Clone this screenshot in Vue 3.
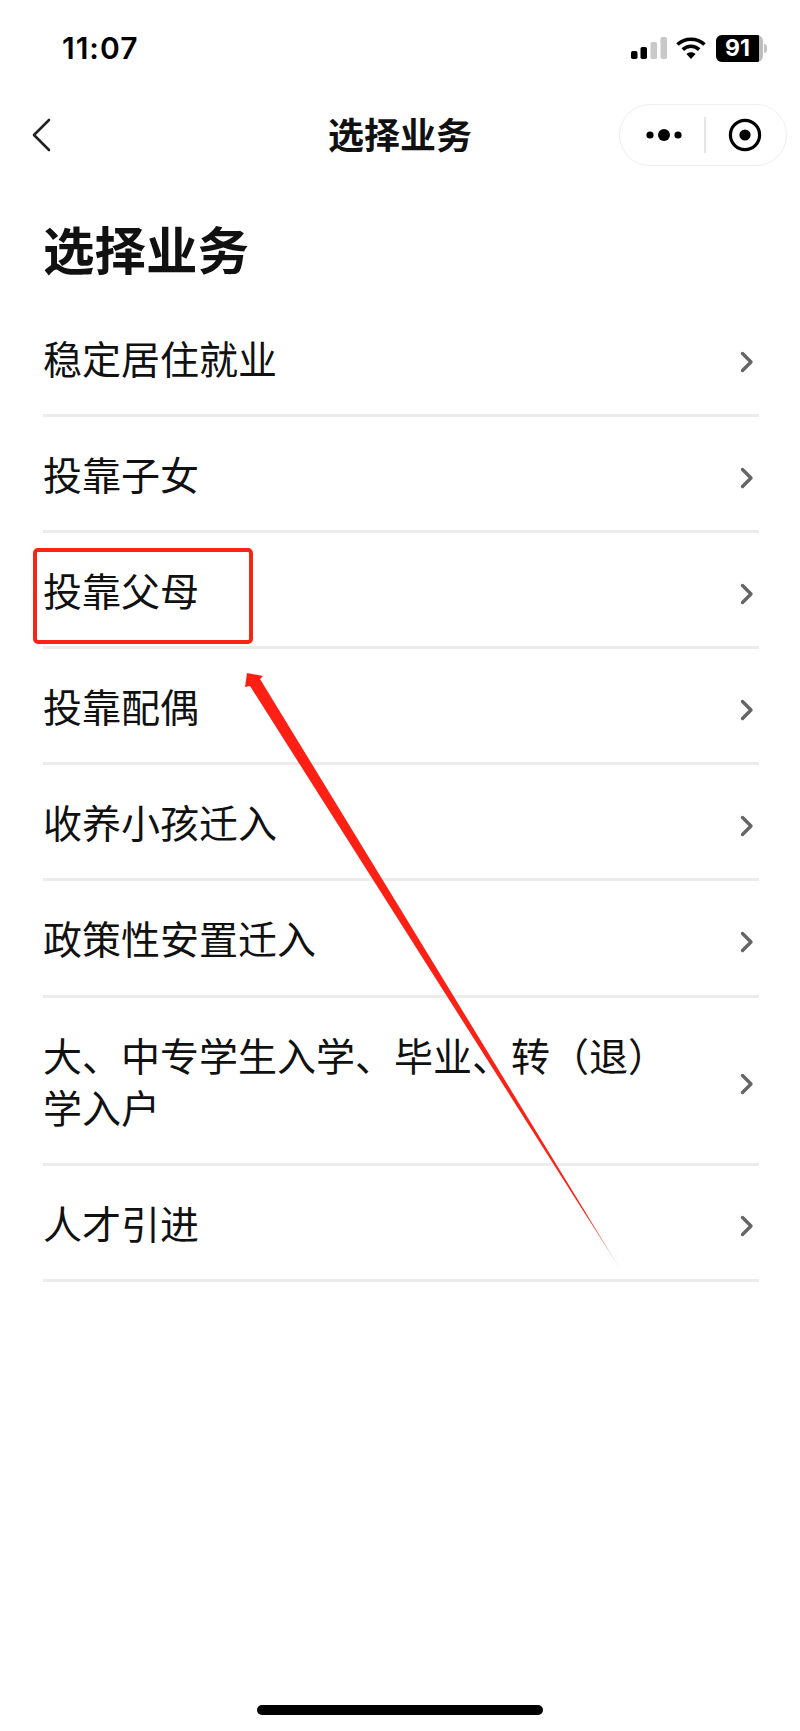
<script setup>
const items = [
  '稳定居住就业',
  '投靠子女',
  '投靠父母',
  '投靠配偶',
  '收养小孩迁入',
  '政策性安置迁入',
  '大、中专学生入学、毕业、转（退）学入户',
  '人才引进'
]
</script>

<template>
  <div class="page">
    <header class="status">
      <span class="time">11:07</span>
      <div class="status-icons">
        <svg class="signal" width="36" height="22" viewBox="0 0 36 22">
          <rect x="0" y="14" width="6.5" height="8" rx="1.8" fill="#000" />
          <rect x="9.5" y="10" width="6.5" height="12" rx="1.8" fill="#000" />
          <rect x="19.5" y="5" width="6.5" height="17" rx="1.8" fill="#c9c9c9" />
          <rect x="29.5" y="0" width="6.5" height="22" rx="1.8" fill="#c9c9c9" />
        </svg>
        <svg class="wifi" width="30" height="22" viewBox="0 0 30 22">
          <path d="M1.5 7.5C9 .5 21 .5 28.5 7.5" fill="none" stroke="#000" stroke-width="3.6" />
          <path d="M6.8 12.6C11.5 8.2 18.5 8.2 23.2 12.6" fill="none" stroke="#000" stroke-width="3.6" />
          <path d="M10.4 17 15 22l4.6-5c-2.6-2.4-6.6-2.4-9.2 0Z" fill="#000" />
        </svg>
        <div class="battery">
          <div class="battery-body">
            <span class="battery-level">91</span>
            <span class="battery-rest"></span>
          </div>
          <span class="battery-nub"></span>
        </div>
      </div>
    </header>

    <nav class="nav">
      <svg class="back" width="20" height="34" viewBox="0 0 20 34">
        <path d="M17 2 2 17l15 15" fill="none" stroke="#222" stroke-width="2.6" stroke-linecap="round" stroke-linejoin="round" />
      </svg>
      <span class="nav-title">选择业务</span>
      <div class="capsule">
        <svg class="capsule-more" width="44" height="14" viewBox="0 0 44 14">
          <circle cx="8" cy="7" r="3.6" fill="#000" />
          <circle cx="22" cy="7" r="6" fill="#000" />
          <circle cx="36" cy="7" r="3.6" fill="#000" />
        </svg>
        <span class="capsule-line"></span>
        <svg class="capsule-target" width="34" height="34" viewBox="0 0 34 34">
          <circle cx="17" cy="17" r="14.6" fill="none" stroke="#000" stroke-width="3.2" />
          <circle cx="17" cy="17" r="5.6" fill="#000" />
        </svg>
      </div>
    </nav>

    <h1 class="heading">选择业务</h1>

    <ul class="list">
      <li v-for="item in items" :key="item" class="row">
        <span class="label">{{ item }}</span>
        <svg class="chevron" width="14" height="22" viewBox="0 0 14 22">
          <path d="M2.5 2.5l8.5 8.5-8.5 8.5" fill="none" stroke="#666" stroke-width="3.4" stroke-linejoin="round" stroke-linecap="round" />
        </svg>
      </li>
    </ul>

    <div class="home-bar"></div>

    <div class="red-box"></div>
    <svg class="arrow" width="800" height="1731" viewBox="0 0 800 1731">
      <defs>
        <linearGradient id="arrowFill" gradientUnits="userSpaceOnUse" x1="247" y1="673" x2="622" y2="1272">
          <stop offset="0" stop-color="#fe1f14" />
          <stop offset="0.9" stop-color="#fb2216" />
          <stop offset="1" stop-color="#fb2216" stop-opacity="0.15" />
        </linearGradient>
      </defs>
      <polygon points="247,673 263,676 260,679 622,1272 250,686 245,687" fill="url(#arrowFill)" />
    </svg>
  </div>
</template>

<style>
html, body {
  margin: 0;
  background: #fff;
}
</style>

<style scoped>
.page {
  position: relative;
  width: 800px;
  height: 1731px;
  overflow: hidden;
  background: #fff;
  color: #111;
  font-family: "Noto Sans CJK SC", "Liberation Sans", sans-serif;
}
.status {
  height: 90px;
  box-sizing: border-box;
  padding: 30px 33px 0 62px;
  display: flex;
  justify-content: space-between;
  align-items: flex-start;
}
.time {
  font-family: Inter, "Liberation Sans", sans-serif;
  font-size: 30px;
  line-height: 36px;
  font-weight: 600;
  letter-spacing: 1px;
  color: #000;
}
.status-icons {
  display: flex;
  align-items: center;
  height: 36px;
}
.signal {
  margin-right: 9px;
}
.wifi {
  margin-right: 10px;
}
.battery {
  display: flex;
  align-items: center;
}
.battery-body {
  width: 47px;
  height: 27px;
  border-radius: 6px;
  overflow: hidden;
  display: flex;
  background: #bdbdbd;
}
.battery-level {
  flex: 1;
  background: #000;
  color: #fff;
  font-family: Inter, "Liberation Sans", sans-serif;
  font-size: 23px;
  font-weight: 700;
  line-height: 27px;
  text-align: center;
}
.battery-rest {
  width: 4px;
}
.battery-nub {
  width: 3px;
  height: 9px;
  margin-left: 1px;
  border-radius: 0 3px 3px 0;
  background: #c4c4c4;
}
.nav {
  position: relative;
  height: 90px;
  display: flex;
  align-items: center;
  padding: 0 13px 0 32px;
}
.back {
  flex: none;
}
.nav-title {
  position: absolute;
  left: 0;
  right: 0;
  top: 18px;
  text-align: center;
  font-size: 36px;
  line-height: 50px;
  font-weight: 700;
  color: #111;
}
.capsule {
  margin-left: auto;
  width: 168px;
  height: 62px;
  box-sizing: border-box;
  border: 1.5px solid #eeeeee;
  border-radius: 31px;
  display: flex;
  align-items: center;
  padding-left: 22px;
  background: #fff;
}
.capsule-line {
  width: 2px;
  height: 36px;
  margin-left: 18px;
  background: #e6e6e6;
}
.capsule-target {
  margin-left: 22px;
}
.heading {
  margin: 0;
  height: 121px;
  box-sizing: border-box;
  padding: 32px 0 0 43px;
  font-size: 51.5px;
  line-height: 72px;
  font-weight: 700;
  color: #111;
}
.list {
  margin: 0 41px 0 43px;
  padding: 0;
  list-style: none;
}
.row {
  display: flex;
  align-items: center;
  justify-content: space-between;
  padding: 30px 5px 31.1px 0;
  border-bottom: 3px solid #ececec;
}
.label {
  width: 640px;
  font-size: 39px;
  line-height: 52px;
  color: #111;
}
.chevron {
  flex: none;
  margin-top: 9px;
}
.home-bar {
  position: absolute;
  left: 257px;
  top: 1705px;
  width: 286px;
  height: 10px;
  border-radius: 5px;
  background: #000;
}
.red-box {
  position: absolute;
  left: 33px;
  top: 548px;
  width: 220px;
  height: 96px;
  box-sizing: border-box;
  border: 4.5px solid #fb2216;
  border-radius: 5px;
}
.arrow {
  position: absolute;
  left: 0;
  top: 0;
  pointer-events: none;
}
</style>
